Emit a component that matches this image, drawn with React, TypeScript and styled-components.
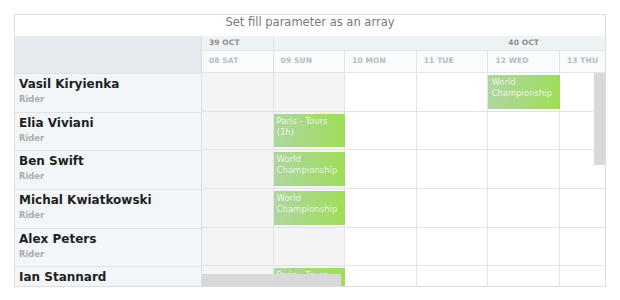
import React from 'react';
import styled, { createGlobalStyle } from 'styled-components';

const GlobalStyle = createGlobalStyle`
  html, body {
    margin: 0;
    padding: 0;
    background: #fff;
  }
  body {
    font-family: 'DejaVu Sans', 'Liberation Sans', sans-serif;
  }
`;

const DAY_WIDTH = 71.6;
const ROW_HEIGHT = 38.7;

interface Week {
  label: string;
  days: number;
}

interface Rider {
  name: string;
  events: { day: number; text: string }[];
}

const weeks: Week[] = [
  { label: '39 OCT', days: 1 },
  { label: '40 OCT', days: 7 },
];

const days = ['08 SAT', '09 SUN', '10 MON', '11 TUE', '12 WED', '13 THU', '14 FRI', '15 SAT'];
const weekend = [0, 1, 7];

const riders: Rider[] = [
  { name: 'Vasil Kiryienka', events: [{ day: 4, text: 'World Championship' }] },
  { name: 'Elia Viviani', events: [{ day: 1, text: 'Paris - Tours (1h)' }] },
  { name: 'Ben Swift', events: [{ day: 1, text: 'World Championship' }] },
  { name: 'Michal Kwiatkowski', events: [{ day: 1, text: 'World Championship' }] },
  { name: 'Alex Peters', events: [] },
  { name: 'Ian Stannard', events: [{ day: 1, text: 'Paris - Tours' }] },
];

const Panel = styled.div`
  margin: 14px;
  width: 592px;
  height: 273px;
  box-sizing: border-box;
  border: 1px solid #dedede;
  display: flex;
  flex-direction: column;
  overflow: hidden;
`;

const Title = styled.div`
  height: 21px;
  line-height: 14px;
  text-align: center;
  font-size: 11.5px;
  color: #7a7a7a;
  background: #fff;
  flex: none;
`;

const Body = styled.div`
  position: relative;
  flex: 1;
  display: flex;
  overflow: hidden;
`;

const Locked = styled.div`
  width: 187px;
  flex: none;
  border-right: 1px solid #dcdfe2;
  box-sizing: border-box;
  display: flex;
  flex-direction: column;
`;

const LockedHeader = styled.div`
  height: 37px;
  flex: none;
  background: #e6eaee;
  border-bottom: 1px solid #dde1e5;
`;

const Schedule = styled.div`
  flex: 1;
  overflow: hidden;
  display: flex;
  flex-direction: column;
`;

const HeaderRow = styled.div<{ $h: number; $bg: string }>`
  display: flex;
  height: ${p => p.$h}px;
  flex: none;
  background: ${p => p.$bg};
  border-bottom: 1px solid #e2e6e9;
  box-sizing: border-box;
`;

const WeekCell = styled.div<{ $w: number; $center?: boolean }>`
  width: ${p => p.$w}px;
  flex: none;
  box-sizing: border-box;
  border-right: 1px solid #e0e4e7;
  font-size: 7.5px;
  font-weight: bold;
  color: #8c8c8c;
  line-height: 14px;
  padding-left: ${p => (p.$center ? 0 : 7)}px;
  text-align: ${p => (p.$center ? 'center' : 'left')};
  letter-spacing: 0.1px;
`;

const DayCell = styled.div`
  width: ${DAY_WIDTH}px;
  flex: none;
  box-sizing: border-box;
  border-right: 1px solid #e0e4e7;
  font-size: 7.5px;
  font-weight: bold;
  color: #b6bcc1;
  line-height: 20px;
  padding-left: 7px;
  letter-spacing: 0.1px;
`;

const NameRow = styled.div`
  height: ${ROW_HEIGHT}px;
  flex: none;
  box-sizing: border-box;
  background: #f2f6f9;
  border-bottom: 1px solid #dfe3e6;
  padding: 3px 0 0 4px;
`;

const Name = styled.div`
  font-size: 12px;
  font-weight: bold;
  color: #1e1e1e;
  line-height: 15px;
`;

const Role = styled.div`
  font-size: 8.4px;
  font-weight: bold;
  color: #ababab;
  margin-top: 2px;
`;

const TimeRow = styled.div`
  display: flex;
  height: ${ROW_HEIGHT}px;
  flex: none;
  box-sizing: border-box;
  border-bottom: 1px solid #e3e3e3;
`;

const TimeCell = styled.div<{ $weekend: boolean }>`
  width: ${DAY_WIDTH}px;
  flex: none;
  box-sizing: border-box;
  border-right: 1px solid #e3e3e3;
  background: ${p => (p.$weekend ? '#f4f4f4' : '#fff')};
  padding: 2px 0 2px 0;
  display: flex;
`;

const EventBar = styled.div`
  flex: 1;
  margin-right: -1px;
  background: linear-gradient(90deg, #afd69d 0%, #a6d97c 55%, #9fde58 100%);
  color: rgba(255, 255, 255, 0.78);
  font-size: 8.5px;
  line-height: 11px;
  padding: 2px 3px;
  overflow: hidden;
`;

const VScroll = styled.div`
  position: absolute;
  right: 0;
  top: 37px;
  width: 11px;
  height: 92px;
  background: #d9d9d9;
`;

const HScroll = styled.div`
  position: absolute;
  left: 187px;
  bottom: 0;
  width: 139px;
  height: 12px;
  background: #d9d9d9;
`;

export default function App() {
  return (
    <>
      <GlobalStyle />
      <Panel>
        <Title>Set fill parameter as an array</Title>
        <Body>
          <Locked>
            <LockedHeader />
            {riders.map(r => (
              <NameRow key={r.name}>
                <Name>{r.name}</Name>
                <Role>Rider</Role>
              </NameRow>
            ))}
          </Locked>
          <Schedule>
            <HeaderRow $h={15} $bg="#eef3f6">
              {weeks.map((w, i) => (
                <WeekCell key={w.label} $w={w.days * DAY_WIDTH} $center={i > 0}>
                  {w.label}
                </WeekCell>
              ))}
            </HeaderRow>
            <HeaderRow $h={22} $bg="#f9fbfc">
              {days.map(d => (
                <DayCell key={d}>{d}</DayCell>
              ))}
            </HeaderRow>
            {riders.map(r => (
              <TimeRow key={r.name}>
                {days.map((d, i) => {
                  const ev = r.events.find(e => e.day === i);
                  return (
                    <TimeCell key={d} $weekend={weekend.includes(i)}>
                      {ev && <EventBar>{ev.text}</EventBar>}
                    </TimeCell>
                  );
                })}
              </TimeRow>
            ))}
          </Schedule>
          <VScroll />
          <HScroll />
        </Body>
      </Panel>
    </>
  );
}
